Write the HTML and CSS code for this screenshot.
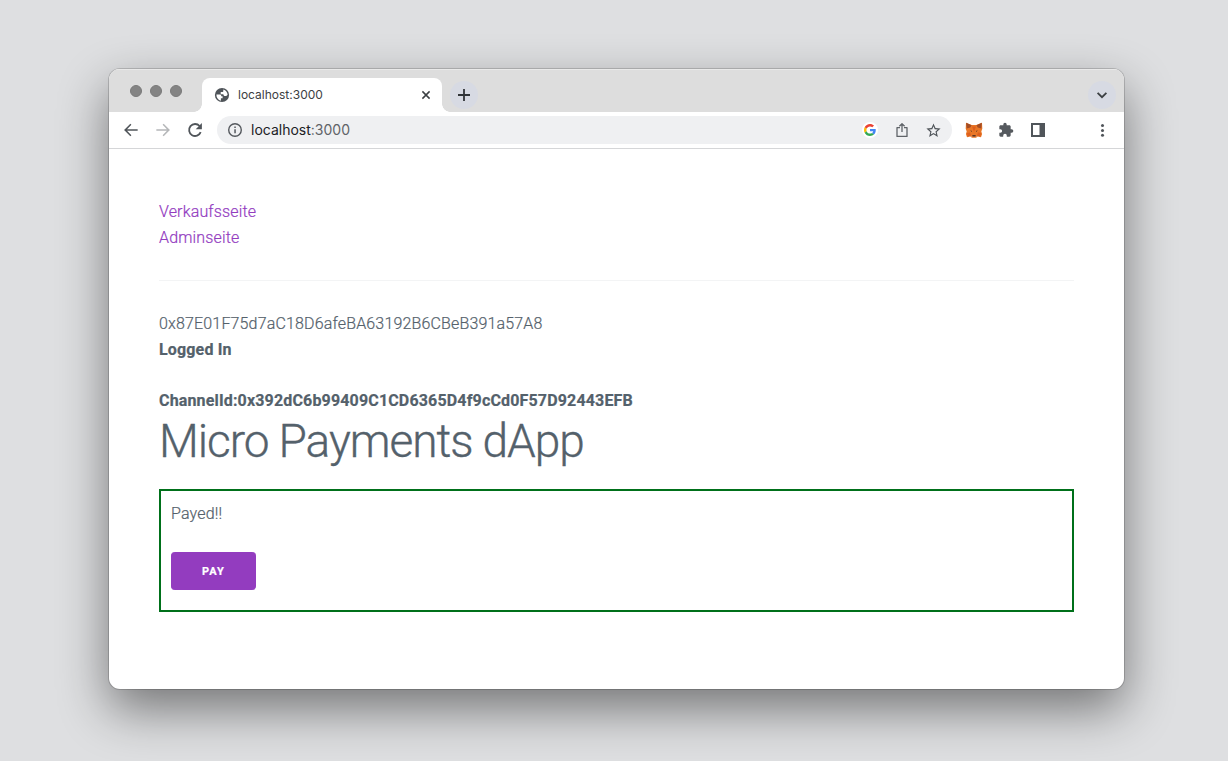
FILE: index.html
```html
<!DOCTYPE html>
<html lang="de">
<head>
<meta charset="utf-8">
<title>localhost:3000</title>
<link rel="stylesheet" href="styles.css">
</head>
<body>
<div class="window">
  <div class="tabstrip">
    <div class="lights"><i></i><i></i><i></i></div>
    <div class="tab">
      <svg class="globe" width="16" height="16" viewBox="0 0 16 16"><circle cx="8" cy="8" r="7.100" fill="#4f5459"/><path d="M2.400 7.600h3.200c1.200 0 1.700.6 1.700 1.600h1.300v2.100H6.900v2.400C4.200 13.200 2.300 10.900 2.400 7.600ZM9.300 2.500c2.500.6 4.200 2.700 4.300 5.300-.5.900-1.300 1.200-2.300 1.200-1.400 0-1.900-.7-1.900-1.800H6.700V5.100h1.500c.8 0 1.100-.5 1.100-1.200Z" fill="#fff"/></svg>
      <span class="tab-title">localhost:3000</span>
      <svg width="16" height="16" viewBox="0 0 16 16"><path d="m4.400 4.400 7.200 7.200m0-7.200-7.200 7.200" stroke="#3c4043" stroke-width="1.500"/></svg>
    </div>
    <div class="round"><svg width="16" height="16" viewBox="0 0 16 16"><path d="M8 2v12M2 8h12" stroke="#303438" stroke-width="1.800"/></svg></div>
    <div class="round search-tabs"><svg width="16" height="16" viewBox="0 0 16 16"><path d="m3.600 5.800 4.400 4.400 4.400-4.400" fill="none" stroke="#3c4043" stroke-width="1.800"/></svg></div>
  </div>
  <div class="toolbar">
    <svg class="nav" viewBox="0 0 24 24"><path fill="#50555a" d="M22 10.700H6.100l6.500-6.500L11 2.600 1.600 12l9.400 9.400 1.600-1.600-6.500-6.500H22z"/></svg>
    <svg class="nav" viewBox="0 0 24 24"><path fill="#b5b7b9" d="M2 10.700h15.900l-6.500-6.500L13 2.600l9.400 9.400-9.400 9.400-1.600-1.600 6.500-6.500H2z"/></svg>
    <svg class="nav" viewBox="0 0 16 16"><path d="M13.700 10.200A6 6 0 1 1 12.600 4" fill="none" stroke="#50555a" stroke-width="1.800"/><path d="M14.900 1v6.300H8.700z" fill="#50555a"/></svg>
    <div class="omnibox">
      <svg width="16" height="16" viewBox="0 0 16 16"><circle cx="8" cy="8" r="6.300" fill="none" stroke="#55595e" stroke-width="1.400"/><path d="M7.300 7.200h1.500v4.100H7.300zM7.300 4.500h1.500V6H7.300z" fill="#55595e"/></svg>
      <span class="url"><b>localhost</b>:3000</span>
      <span class="google"><svg width="12" height="12" viewBox="0 0 48 48"><path fill="#EA4335" d="M24 9.500c3.540 0 6.710 1.220 9.210 3.600l6.850-6.850C35.900 2.380 30.470 0 24 0 14.620 0 6.510 5.380 2.560 13.220l7.980 6.190C12.430 13.720 17.740 9.500 24 9.500z"/><path fill="#4285F4" d="M46.980 24.550c0-1.570-.15-3.090-.38-4.550H24v9.020h12.940c-.58 2.960-2.260 5.480-4.780 7.180l7.730 6c4.510-4.180 7.090-10.360 7.090-17.650z"/><path fill="#FBBC05" d="M10.530 28.590c-.48-1.450-.76-2.990-.76-4.590s.27-3.140.76-4.590l-7.980-6.190C.92 16.460 0 20.120 0 24s.92 7.540 2.560 10.780z"/><path fill="#34A853" d="M24 48c6.480 0 11.930-2.130 15.890-5.810l-7.730-6c-2.150 1.450-4.920 2.300-8.160 2.300-6.260 0-11.570-4.220-13.470-9.910l-7.980 6.190C6.510 42.620 14.620 48 24 48z"/></svg></span>
      <svg class="share" width="16" height="16" viewBox="0 0 16 16"><path d="M6 5.600H3v8.800h10V5.600h-3M8 10V2M5.400 4.300 8 1.700l2.600 2.600" fill="none" stroke="#5f6368" stroke-width="1.300" stroke-linejoin="round"/></svg>
      <svg class="star" width="17" height="17" viewBox="0 0 24 24"><path fill="#50555a" d="m22 9.240-7.190-.62L12 2 9.190 8.630 2 9.240l5.460 4.730L5.820 21 12 17.270 18.180 21l-1.630-7.030zM12 15.400l-3.760 2.270 1-4.280-3.320-2.880 4.380-.38L12 6.100l1.710 4.040 4.380.38-3.320 2.880 1 4.280z"/></svg>
    </div>
    <svg class="fox" width="18" height="16" viewBox="0 0 18 16"><path fill="#e97727" d="M1 .7 6.700 3h4.600L17 .7l.3 6-1 2.800.8 2.500-1.100 3.200-3.300-.6-1.700 1.200H7l-1.700-1.200-3.300.6L.9 12l.8-2.500-1-2.800z"/><path fill="#a34d25" d="M1.200.8 6.600 3.200 5.300 5.500 1.700 6.600zM16.800.8l-5.400 2.400 1.300 2.300 3.600 1.100z"/><path fill="#dd5f1e" d="m2 11 3-.6 1.100 3.200-3.500 1zm14 0-3-.6-1.100 3.200 3.500 1zM7 4.500h4L9 10z"/><path fill="#593525" d="m5.200 8.300 1.900.8-.4.900zm7.600 0-1.900.8.4.9zM7.500 13h3l.3 1.500H7.200z"/><path fill="#c9a48e" d="m5.600 14.300 1.700.3v.9zm6.800 0-1.700.3v.9z"/></svg>
    <svg class="puzzle" width="16" height="16" viewBox="0 0 24 24"><path fill="#55595e" d="M20.500 11H19V7c0-1.100-.9-2-2-2h-4V3.500a2.500 2.500 0 0 0-5 0V5H4c-1.100 0-1.990.9-1.990 2v3.800H3.500a2.700 2.700 0 0 1 0 5.400H2V20c0 1.100.9 2 2 2h3.800v-1.500a2.700 2.700 0 0 1 5.400 0V22H17c1.100 0 2-.9 2-2v-4h1.500a2.500 2.500 0 0 0 0-5z"/></svg>
    <svg class="panel" width="16" height="16" viewBox="0 0 16 16"><path fill="#50555a" fill-rule="evenodd" d="M1 1h14v14H1zM3 3v10h6.500V3z"/></svg>
    <svg class="more" width="16" height="16" viewBox="0 0 16 16"><g fill="#50555a"><circle cx="8.500" cy="3.500" r="1.500"/><circle cx="8.500" cy="8.400" r="1.500"/><circle cx="8.500" cy="13.200" r="1.500"/></g></svg>
  </div>
  <main class="page">
    <nav><a href="#">Verkaufsseite</a><br><a href="#">Adminseite</a></nav>
    <hr>
    <div>0x87E01F75d7aC18D6afeBA63192B6CBeB391a57A8</div>
    <div><strong>Logged In</strong></div>
    <br>
    <div><strong>ChannelId:0x392dC6b99409C1CD6365D4f9cCd0F57D92443EFB</strong></div>
    <h1>Micro Payments dApp</h1>
    <section class="payment">
      <div>Payed!!</div>
      <button>Pay</button>
    </section>
  </main>
</div>
</body>
</html>
```
FILE: styles.css
```css
* { box-sizing: border-box; }
body {
  margin: 0;
  height: 761px;
  padding: 69px 104px 72px 109px;
  overflow: hidden;
  background: #dedfe1;
}
svg { display: block; flex: none; }
.window {
  height: 620px;
  border-radius: 11px;
  background: #fff;
  overflow: hidden;
  box-shadow: 0 0 0 1px rgba(0,0,0,.16), 0 20px 50px rgba(0,0,0,.48);
}
.tabstrip {
  display: flex;
  height: 43px;
  background: #ddd;
  box-shadow: inset 0 1px #e9e9e9;
}
.lights { display: flex; gap: 8px; padding: 16px 20px 0 21px; }
.lights i { width: 12px; height: 12px; border-radius: 50%; background: #848484; border: 1px solid #7a7a7a; }
.tab {
  position: relative;
  display: flex;
  align-items: center;
  width: 240px;
  height: 34px;
  margin-top: 9px;
  padding: 0 8px 0 12px;
  border-radius: 8px 8px 0 0;
  background: #fff;
}
.tab::before, .tab::after {
  content: "";
  position: absolute;
  bottom: 0;
  width: 8px;
  height: 8px;
}
.tab::before { left: -8px; background: radial-gradient(circle at 0 0, transparent 7.5px, #fff 8px); }
.tab::after { right: -8px; background: radial-gradient(circle at 100% 0, transparent 7.5px, #fff 8px); }
.tab-title { flex: 1; margin-left: 8px; font: 12px/16px Inter, sans-serif; color: #3c4043; }
.round {
  display: flex;
  align-items: center;
  justify-content: center;
  width: 28px;
  height: 28px;
  margin: 12px 0 0 8px;
  border-radius: 50%;
  background: #d7dae3;
}
.search-tabs { margin-left: auto; margin-right: 8px; }
.toolbar {
  display: flex;
  align-items: center;
  height: 37px;
  padding: 0 14px;
  border-bottom: 1px solid #d5d6d8;
}
.nav { width: 16px; height: 16px; margin-right: 16px; }
.omnibox {
  display: flex;
  align-items: center;
  width: 735px;
  height: 28px;
  margin-left: -2px;
  padding: 0 10px;
  border-radius: 14px;
  background: #eff0f2;
}
.url { flex: 1; margin-left: 8px; font: 14px/20px Inter, sans-serif; color: #5f6368; }
.url b { font-weight: 400; color: #202124; }
.google { display: flex; align-items: center; justify-content: center; width: 16px; height: 16px; border-radius: 50%; background: #fff; }
.share { margin-left: 16px; }
.star { margin-left: 15px; }
.fox { margin-left: 13px; }
.puzzle { margin-left: 15px; }
.panel { margin-left: 16px; }
.more { margin-left: auto; }
.page {
  padding: 50px;
  font: 300 16px/25.6px Roboto, sans-serif;
  letter-spacing: .16px;
  color: #54616b;
  -webkit-text-stroke: .2px;
}
.page a { color: #933cbf; text-decoration: none; }
.page strong { font-weight: 700; }
.page hr { margin: 30px 0; border: 0; border-top: 1px solid #f3f4f5; }
.page h1 { margin: 0 0 20px; font-size: 46px; font-weight: 300; line-height: 55.2px; letter-spacing: -1.05px; -webkit-text-stroke: .35px; }
.payment { padding: 10px; border: 2px solid #00701a; }
.payment button {
  display: block;
  height: 38px;
  margin: 25.6px 0 10px;
  padding: 1px 30px 0;
  border: 0;
  border-left: 1px solid #933cbf;
  border-right: 1px solid #933cbf;
  border-radius: 4px;
  background: #933cbf;
  color: #fff;
  font: 700 11px/37px Roboto, sans-serif;
  letter-spacing: 1.1px;
  text-transform: uppercase;
}
```
